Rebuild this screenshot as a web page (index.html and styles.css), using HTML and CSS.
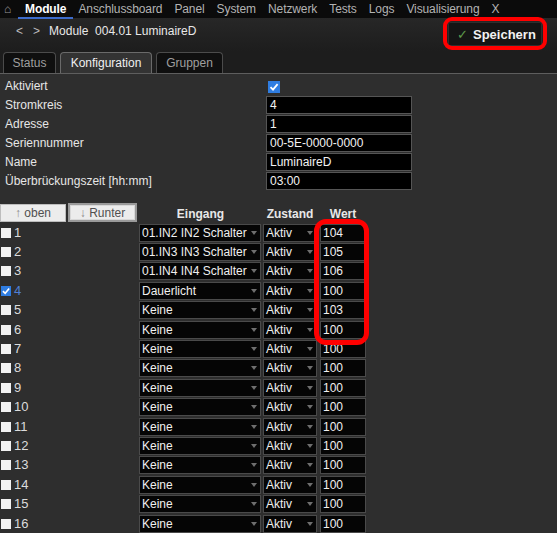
FILE: index.html
```html
<!DOCTYPE html>
<html lang="de">
<head>
<meta charset="utf-8">
<title>Module 004.01 LuminaireD</title>
<link rel="stylesheet" href="styles.css">
</head>
<body>
<nav class="topnav">
  <span class="home">⌂</span>
  <span class="nav-item active">Module</span>
  <span class="nav-item">Anschlussboard</span>
  <span class="nav-item">Panel</span>
  <span class="nav-item">System</span>
  <span class="nav-item">Netzwerk</span>
  <span class="nav-item">Tests</span>
  <span class="nav-item">Logs</span>
  <span class="nav-item">Visualisierung</span>
  <span class="nav-item">X</span>
</nav>
<header class="header">
  <div class="title"><span class="arrow">&lt;</span><span class="arrow arrow2">&gt;</span><span>Module&nbsp; 004.01 LuminaireD</span></div>
  <button class="save"><span class="check">✓</span>Speichern</button>
</header>
<div class="tabs">
  <div class="tab tab-status">Status</div>
  <div class="tab tab-konf active">Konfiguration</div>
  <div class="tab tab-grp">Gruppen</div>
</div>
<main class="content">
  <div class="form">
    <div class="label">Aktiviert</div><div><span class="cb big checked"><svg viewBox="0 0 12 12" width="12" height="12"><path d="M2.5 6.2 L5 8.6 L9.6 3.2" fill="none" stroke="#fff" stroke-width="1.8"/></svg></span></div>
    <div class="label">Stromkreis</div><div class="inp">4</div>
    <div class="label">Adresse</div><div class="inp">1</div>
    <div class="label">Seriennummer</div><div class="inp">00-5E-0000-0000</div>
    <div class="label">Name</div><div class="inp">LuminaireD</div>
    <div class="label">Überbrückungszeit [hh:mm]</div><div class="inp">03:00</div>
  </div>

  <div class="table">
    <div class="btns">
      <button class="btn btn-up"><span class="arr">↑</span> oben</button>
      <button class="btn btn-down focus"><span class="arr">↓</span> Runter</button>
    </div>
    <div class="th">Eingang</div>
    <div class="th">Zustand</div>
    <div class="th">Wert</div>

    <div class="num"><span class="cb"></span>1</div>
    <div class="sel eing"><span>01.IN2 IN2 Schalter</span><i class="caret"></i></div>
    <div class="sel zust"><span>Aktiv</span><i class="caret"></i></div>
    <div class="wert">104</div>

    <div class="num"><span class="cb"></span>2</div>
    <div class="sel eing"><span>01.IN3 IN3 Schalter</span><i class="caret"></i></div>
    <div class="sel zust"><span>Aktiv</span><i class="caret"></i></div>
    <div class="wert">105</div>

    <div class="num"><span class="cb"></span>3</div>
    <div class="sel eing"><span>01.IN4 IN4 Schalter</span><i class="caret"></i></div>
    <div class="sel zust"><span>Aktiv</span><i class="caret"></i></div>
    <div class="wert">106</div>

    <div class="num sel-row"><span class="cb checked"><svg viewBox="0 0 12 12" width="10" height="10"><path d="M2.3 6.2 L5 8.8 L9.8 3" fill="none" stroke="#fff" stroke-width="2"/></svg></span>4</div>
    <div class="sel eing"><span>Dauerlicht</span><i class="caret"></i></div>
    <div class="sel zust"><span>Aktiv</span><i class="caret"></i></div>
    <div class="wert">100</div>

    <div class="num"><span class="cb"></span>5</div>
    <div class="sel eing"><span>Keine</span><i class="caret"></i></div>
    <div class="sel zust"><span>Aktiv</span><i class="caret"></i></div>
    <div class="wert">103</div>

    <div class="num"><span class="cb"></span>6</div>
    <div class="sel eing"><span>Keine</span><i class="caret"></i></div>
    <div class="sel zust"><span>Aktiv</span><i class="caret"></i></div>
    <div class="wert">100</div>

    <div class="num"><span class="cb"></span>7</div>
    <div class="sel eing"><span>Keine</span><i class="caret"></i></div>
    <div class="sel zust"><span>Aktiv</span><i class="caret"></i></div>
    <div class="wert">100</div>

    <div class="num"><span class="cb"></span>8</div>
    <div class="sel eing"><span>Keine</span><i class="caret"></i></div>
    <div class="sel zust"><span>Aktiv</span><i class="caret"></i></div>
    <div class="wert">100</div>

    <div class="num"><span class="cb"></span>9</div>
    <div class="sel eing"><span>Keine</span><i class="caret"></i></div>
    <div class="sel zust"><span>Aktiv</span><i class="caret"></i></div>
    <div class="wert">100</div>

    <div class="num"><span class="cb"></span>10</div>
    <div class="sel eing"><span>Keine</span><i class="caret"></i></div>
    <div class="sel zust"><span>Aktiv</span><i class="caret"></i></div>
    <div class="wert">100</div>

    <div class="num"><span class="cb"></span>11</div>
    <div class="sel eing"><span>Keine</span><i class="caret"></i></div>
    <div class="sel zust"><span>Aktiv</span><i class="caret"></i></div>
    <div class="wert">100</div>

    <div class="num"><span class="cb"></span>12</div>
    <div class="sel eing"><span>Keine</span><i class="caret"></i></div>
    <div class="sel zust"><span>Aktiv</span><i class="caret"></i></div>
    <div class="wert">100</div>

    <div class="num"><span class="cb"></span>13</div>
    <div class="sel eing"><span>Keine</span><i class="caret"></i></div>
    <div class="sel zust"><span>Aktiv</span><i class="caret"></i></div>
    <div class="wert">100</div>

    <div class="num"><span class="cb"></span>14</div>
    <div class="sel eing"><span>Keine</span><i class="caret"></i></div>
    <div class="sel zust"><span>Aktiv</span><i class="caret"></i></div>
    <div class="wert">100</div>

    <div class="num"><span class="cb"></span>15</div>
    <div class="sel eing"><span>Keine</span><i class="caret"></i></div>
    <div class="sel zust"><span>Aktiv</span><i class="caret"></i></div>
    <div class="wert">100</div>

    <div class="num"><span class="cb"></span>16</div>
    <div class="sel eing"><span>Keine</span><i class="caret"></i></div>
    <div class="sel zust"><span>Aktiv</span><i class="caret"></i></div>
    <div class="wert">100</div>
  </div>
</main>
<div class="mark mark-save"></div>
<div class="mark mark-wert"></div>
</body>
</html>
```

FILE: styles.css
```css
* { box-sizing: border-box; }

html, body {
  margin: 0;
  padding: 0;
}

body {
  position: relative;
  width: 557px;
  height: 533px;
  overflow: hidden;
  background: #2e2e2e;
  color: #e4e4e4;
  font: 12px/14px "Liberation Sans", Arial, sans-serif;
}

/* top navigation */
.topnav {
  height: 18px;
  background: #0b0b0b;
  display: flex;
  align-items: center;
  gap: 12px;
  padding-left: 4px;
  color: #b3b3b3;
  white-space: nowrap;
  letter-spacing: -0.1px;
}
.home {
  color: #9a9a9a;
  font-size: 12px;
  width: 9px;
}
.nav-item.active {
  position: relative;
  color: #ffffff;
  font-weight: bold;
}
.nav-item.active::after {
  content: "";
  position: absolute;
  left: -7px;
  right: -7px;
  bottom: -3px;
  height: 2px;
  background: #3d6ccc;
}

/* header */
.header {
  height: 33px;
  display: flex;
  align-items: flex-start;
  justify-content: space-between;
  background: linear-gradient(#272727, #1d1d1d);
  padding: 0 15px 0 16px;
}
.title {
  padding-top: 6px;
  color: #e8e8e8;
  white-space: nowrap;
}
.arrow {
  color: #bdbdbd;
  margin-right: 10px;
}
.arrow2 { margin-right: 9px; }

.save {
  margin-top: 4px;
  width: 94px;
  height: 24px;
  background: #151515;
  border: 1px solid #2e2e2e;
  border-radius: 2px;
  color: #f2f2f2;
  font: bold 13px "Liberation Sans", Arial, sans-serif;
  display: flex;
  align-items: center;
  padding: 0 0 0 8px;
}
.check {
  color: #5e9c4c;
  font-weight: normal;
  margin-right: 5px;
}

/* tabs */
.tabs {
  height: 22px;
  display: flex;
  align-items: flex-end;
  gap: 4px;
  padding-left: 3px;
  background: #1d1d1d;
}
.tab {
  height: 21px;
  border: 1px solid #4b4b4b;
  border-bottom: none;
  border-radius: 4px 4px 0 0;
  background: #0f0f0f;
  color: #9f9f9f;
  text-align: center;
  line-height: 20px;
}
.tab-status { width: 53px; }
.tab-konf { width: 92px; }
.tab-grp { width: 67px; }
.tab.active {
  background: #333333;
  color: #f0f0f0;
  border-color: #6a6a6a;
}

/* content */
.content {
  border-top: 1px solid #5e5e5e;
  background: #2e2e2e;
}

.form {
  display: grid;
  grid-template-columns: 266px 146px;
  grid-auto-rows: 19px;
  align-items: center;
  padding-top: 2px;
}
.label {
  padding-left: 5px;
  color: #e6e6e6;
  white-space: nowrap;
}
.inp {
  height: 18px;
  background: #000;
  border: 1px solid #555;
  color: #f2f2f2;
  padding-left: 3px;
  line-height: 16px;
}

.cb {
  display: inline-flex;
  align-items: center;
  justify-content: center;
  width: 10px;
  height: 10px;
  background: #f2f2f2;
  vertical-align: middle;
}
.cb.big {
  width: 12px;
  height: 12px;
  margin-left: 2px;
  margin-top: 1px;
}
.cb.checked {
  background: #2f7de1;
}

/* table */
.table {
  margin-top: 13px;
  display: grid;
  grid-template-columns: 139px 123px 56px 50px;
  grid-template-rows: 20px;
  grid-auto-rows: 19.4px;
  align-items: center;
}
.btns {
  display: flex;
  align-items: flex-start;
  height: 20px;
}
.btn {
  height: 18px;
  margin-top: 1px;
  background: #ececec;
  border: 1px solid #bdbdbd;
  color: #505050;
  font: 12px/14px "Liberation Sans", Arial, sans-serif;
  padding: 0;
}
.btn-up { width: 66px; }
.btn-down {
  width: 69px;
  margin-left: 2px;
  margin-top: 0;
  height: 19px;
  border: 2px solid #9a9a9a;
  outline: 1px solid #d8d8d8;
  outline-offset: -3px;
}
.arr { color: #8a8a8a; }

.th {
  text-align: center;
  font-weight: bold;
  color: #e8e8e8;
  padding-top: 1px;
}

.num {
  display: flex;
  align-items: center;
  padding-left: 1px;
  font-size: 13px;
  color: #dcdcdc;
}
.num .cb { margin-right: 3px; }
.num.sel-row { color: #4f7fd4; }

.sel {
  height: 18px;
  background: #050505;
  border: 1px solid #4a4a4a;
  display: flex;
  align-items: center;
  justify-content: space-between;
  padding: 0 3px 0 2px;
  color: #f0f0f0;
  white-space: nowrap;
  overflow: hidden;
}
.eing { width: 122px; }
.zust { width: 54px; margin-left: 1px; }
.caret {
  width: 0;
  height: 0;
  border-left: 3px solid transparent;
  border-right: 3px solid transparent;
  border-top: 4px solid #6e6e6e;
  flex: none;
}
.wert {
  width: 46px;
  height: 18px;
  margin-left: 2px;
  background: #050505;
  border: 1px solid #4a4a4a;
  padding-left: 2px;
  line-height: 16px;
  color: #f0f0f0;
}

/* red annotation marks */
.mark {
  position: absolute;
  border: 4px solid #ff0000;
  pointer-events: none;
}
.mark-save {
  left: 443px;
  top: 17px;
  width: 104px;
  height: 33px;
  border-radius: 9px;
}
.mark-wert {
  left: 314px;
  top: 219px;
  width: 55px;
  height: 126px;
  border-width: 5px;
  border-radius: 12px;
}
```
